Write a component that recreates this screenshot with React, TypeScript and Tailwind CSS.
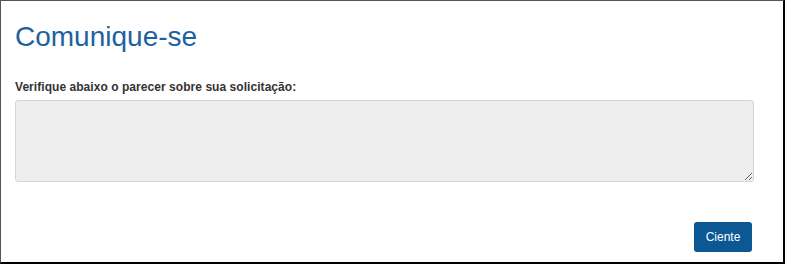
export default function App() {
  return (
    <div className="h-[264px] w-[785px] bg-white" style={{ fontFamily: '"Liberation Sans", Arial, sans-serif' }}>
      <div className="flex h-full w-full flex-col border-l border-t border-[#555] border-r-2 border-b-2 border-r-black border-b-black px-[14px]">
        <h1 className="mt-[19px] text-[28px] leading-[33px] text-[#1c62a0]">Comunique-se</h1>
        <label className="mt-[26px] text-[12px] font-bold leading-[16px] tracking-[0.05px] text-[#333]">
          Verifique abaixo o parecer sobre sua solicitação:
        </label>
        <textarea
          readOnly
          className="mt-[5px] h-[82px] w-[739px] resize-y rounded-[3px] border border-[#d4d4d4] bg-[#eeeeee]"
        />
        <div className="mt-[40px] flex w-[739px] justify-end pr-[2px]">
          <button className="h-[30px] w-[58px] rounded-[3px] bg-[#0c5894] text-[12px] text-white">Ciente</button>
        </div>
      </div>
    </div>
  );
}
